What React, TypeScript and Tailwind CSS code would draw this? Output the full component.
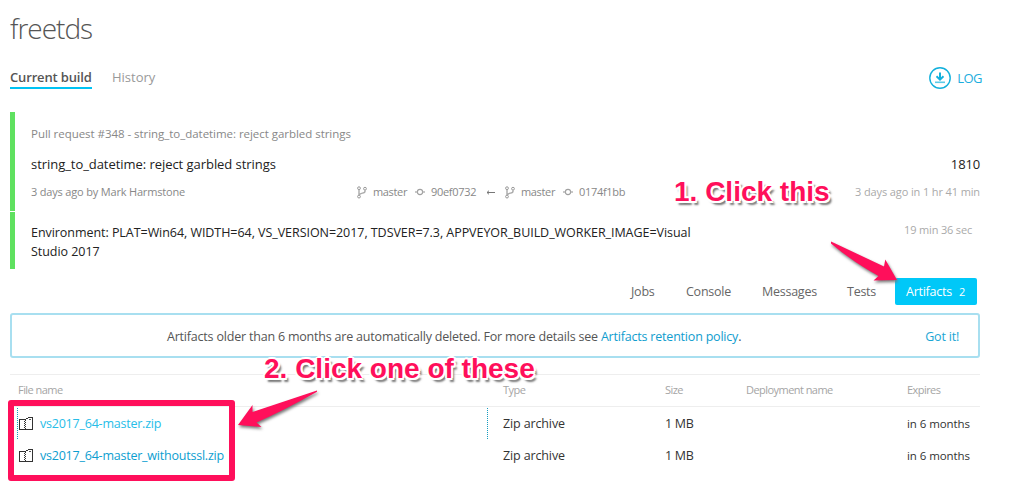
import type { ReactNode } from "react";

const meta = "text-[11px] text-[#888]";

function BranchIcon() {
  return (
    <svg className="shrink-0" width="10" height="13" viewBox="0 0 10 13" fill="none" stroke="#999" strokeWidth="1">
      <circle cx="2" cy="2.2" r="1.4" />
      <circle cx="2" cy="10.6" r="1.4" />
      <circle cx="8" cy="2.7" r="1.4" />
      <path d="M2 3.7v5.4M8 4.2v1c0 1.3-1 1.6-2.6 1.9C3.6 7.5 2.4 7.8 2 9.2" strokeWidth="1.4" stroke="#aaa" />
    </svg>
  );
}

function CommitIcon() {
  return (
    <svg className="shrink-0" width="10" height="8" viewBox="0 0 10 8" fill="none" stroke="#a0a0a0">
      <circle cx="5" cy="4" r="2.6" strokeWidth="1.1" />
      <path d="M0 4h2.3M7.7 4H10" strokeWidth="1.4" stroke="#b5b5b5" />
    </svg>
  );
}

function ZipIcon() {
  return (
    <svg className="shrink-0" width="14" height="13" viewBox="0 0 14 13" fill="none" stroke="#333" shapeRendering="crispEdges">
      <path d="M6 2.5H.5v10h13V.5H9" />
      <path d="M7 1.5h2M6 2.5h1" />
      <path d="M5.5 4v8" strokeDasharray="1 1" />
      <path d="M6.5 3v9" strokeDasharray="1 1" />
      <path d="M10 2.5h2" stroke="#555" />
    </svg>
  );
}

function DownloadIcon() {
  return (
    <svg width="22" height="22" viewBox="0 0 22 22" fill="none" stroke="#12b0dc">
      <circle cx="11" cy="11" r="10.2" strokeWidth="1.4" />
      <path d="M11 5.5v7" strokeWidth="2" />
      <path d="M7.5 9.3l3.5 3.4 3.5-3.4" strokeWidth="1.9" />
      <path d="M6 15.3h10" strokeWidth="1.6" stroke="#5ccbe8" />
    </svg>
  );
}

function Note({ className, children }: { className: string; children: ReactNode }) {
  return (
    <div
      className={`absolute whitespace-nowrap font-['Liberation_Sans',sans-serif] text-[28px] leading-8 font-bold text-[#ff0f5b] [text-shadow:2px_0_0_#fff,-2px_0_0_#fff,0_2px_0_#fff,0_-2px_0_#fff,1.5px_1.5px_0_#fff,-1.5px_1.5px_0_#fff,1.5px_-1.5px_0_#fff,-1.5px_-1.5px_0_#fff,3px_4px_2px_#777] ${className}`}
    >
      {children}
    </div>
  );
}

const columns = "grid grid-cols-[485px_162px_81px_161px_1fr] pl-2";

const files = [
  { name: "vs2017_64-master.zip", color: "text-[#27bde8]", focused: true },
  { name: "vs2017_64-master_withoutssl.zip", color: "text-[#0c9ed0]", focused: false },
];

export default function App() {
  return (
    <div className="relative h-[498px] w-[1022px] overflow-hidden bg-white pr-[42px] pl-[10px] font-['Open_Sans','Noto_Sans',sans-serif] whitespace-nowrap">
      <h1 className="h-[63px] pt-[8px] text-[28px] leading-10 font-light tracking-[-1px] text-[#555]">freetds</h1>

      <div className="-mr-[2px] flex h-[49px] items-start text-[13px] leading-5">
        <div className="mt-1 h-[22px] w-[82px] border-b-2 border-[#00c3f3] font-semibold tracking-[-0.15px] text-[#555]">Current build</div>
        <div className="mt-1 ml-5 text-[#999]">History</div>
        <div className="mt-1 ml-auto flex items-center gap-[6px] tracking-[-0.5px] text-[#1caede]">
          <DownloadIcon />
          LOG
        </div>
      </div>

      <section className="flex h-[99px] flex-col border-l-[5px] border-[#5fe160] pl-4">
        <div className="mt-3 text-[11.5px] leading-5 tracking-[-0.04px] text-[#888]">Pull request #348 - string_to_datetime: reject garbled strings</div>
        <div className="mt-[10px] flex justify-between text-[13px] leading-5 tracking-[-0.05px] text-[#222]">
          <span>string_to_datetime: reject garbled strings</span>
          <span className="tracking-[-0.15px]">1810</span>
        </div>
        <div className={`mt-2 flex h-5 items-center ${meta}`}>
          <span className="w-[326px] tracking-[-0.18px]">3 days ago by Mark Harmstone</span>
          <BranchIcon />
          <span className="ml-[6px] w-[42px] tracking-[-0.35px]">master</span>
          <CommitIcon />
          <span className="ml-[6px] w-[55px] tracking-[-0.3px]">90ef0732</span>
          <svg className="mr-[10px] shrink-0" width="9" height="6" viewBox="0 0 9 6" fill="none" stroke="#777">
            <path d="M9 3.5H1M3 1.7L1 3.5l2 1.8" />
          </svg>
          <BranchIcon />
          <span className="ml-[6px] w-[42px] tracking-[-0.35px]">master</span>
          <CommitIcon />
          <span className="ml-[6px] tracking-[-0.3px]">0174f1bb</span>
          <span className="ml-auto tracking-[-0.12px] text-[#aaa]">3 days ago in 1 hr 41 min</span>
        </div>
      </section>

      <section className="mt-px flex h-[57px] justify-between border-l-[5px] border-[#5fe160] pt-[11px] pr-2 pl-4">
        <div className="text-[12.5px] leading-[19px] tracking-[-0.05px] text-[#222]">
          Environment: PLAT=Win64, WIDTH=64, VS_VERSION=2017, TDSVER=7.3, APPVEYOR_BUILD_WORKER_IMAGE=Visual
          <br />
          Studio 2017
        </div>
        <div className="-mt-px text-[11px] leading-4 tracking-[-0.17px] text-[#aaa]">19 min 36 sec</div>
      </section>

      <nav className="mt-[9px] flex h-[27px] items-center justify-end pr-[3px] text-[12.5px] leading-5 tracking-[-0.25px] text-[#666]">
        <span className="w-[55px]">Jobs</span>
        <span className="w-[76px]">Console</span>
        <span className="w-[85px]">Messages</span>
        <span className="w-[48px]">Tests</span>
        <span className="flex h-[27px] w-[82px] items-center gap-[7px] rounded-[2px] bg-[#00c8f8] pt-px pl-[11px] text-white">
          <span className="font-medium">Artifacts</span>
          <span className="text-[11px]">2</span>
        </span>
      </nav>

      <div className="mt-2 flex h-[45px] items-center rounded-[3px] border-2 border-[#a8dff0] pt-[3px] pr-[19px] pl-[155px] text-[12.5px] tracking-[-0.2px] text-[#555]">
        <p>
          Artifacts older than 6 months are automatically deleted. For more details see{" "}
          <span className="text-[#109dce]">Artifacts retention policy</span>.
        </p>
        <span className="ml-auto text-[#1ba6d4]">Got it!</span>
      </div>

      <div className={`mt-4 h-[33px] items-center border-y border-[#eee] text-[11px] tracking-[-0.55px] text-[#a5a5a5] ${columns}`}>
        <span>File name</span>
        <span>Type</span>
        <span>Size</span>
        <span>Deployment name</span>
        <span>Expires</span>
      </div>
      {files.map((f) => (
        <div key={f.name} className={`h-8 items-center text-[12.5px] leading-5 tracking-[-0.13px] text-[#333] ${columns}`}>
          <div
            className={
              f.focused
                ? "-ml-px flex h-[31px] w-[471px] items-center gap-[7px] border-x border-dotted border-[#159cc0] pl-[1px]"
                : "flex items-center gap-[7px] pl-[1px]"
            }
          >
            <ZipIcon />
            <span className={`pt-[2px] tracking-[-0.22px] ${f.color}`}>{f.name}</span>
          </div>
          <span className="pt-[2px]">Zip archive</span>
          <span className="pt-[2px] tracking-[-0.3px]">1 MB</span>
          <span />
          <span className="pt-px text-[11.5px] tracking-[-0.07px]">in 6 months</span>
        </div>
      ))}

      <div className="absolute top-[400px] left-[8px] h-[81px] w-[227px] rounded-[3px] border-6 border-[#ff0f5b]" />
      <svg className="absolute top-0 left-0 drop-shadow-[1px_2px_1.5px_#777]" width="1022" height="498" viewBox="0 0 1022 498" fill="#ff0f5b">
        <path d="M831 241.5L884 266.5L885.3 259.5L897 280L873.5 280.5L878.5 276Q853 262 831 243.5Z" />
        <path d="M317 390.5L252.5 412L252.5 405L238 425L261.5 427L256.5 422.5Q285 410 317 391.8Z" />
      </svg>
      <Note className="top-[176px] left-[674px]">1. Click this</Note>
      <Note className="top-[353px] left-[264px]">2. Click one of these</Note>
    </div>
  );
}
